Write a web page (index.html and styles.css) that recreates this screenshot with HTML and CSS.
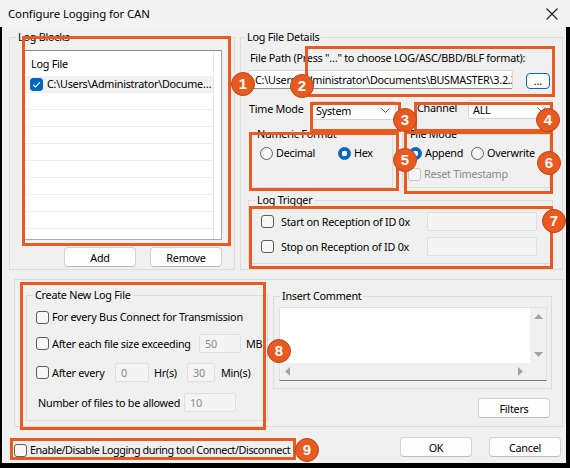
FILE: index.html
```html
<!DOCTYPE html>
<html>
<head>
<meta charset="utf-8">
<title>Configure Logging for CAN</title>
<link rel="stylesheet" href="styles.css">
</head>
<body>
<div class="titlebar">
  <span class="title">Configure Logging for CAN</span>
  <svg class="close" width="12" height="12" viewBox="0 0 12 12"><path d="M0.5 0.5L11.5 11.5M11.5 0.5L0.5 11.5" stroke="#1b1b1b" stroke-width="1.1" fill="none"/></svg>
</div>
<div class="client">
  <div class="top-row">
    <fieldset class="grp blocks">
      <legend class="lg-blocks">Log Blocks</legend>
      <div class="listbox">
        <div class="list-body">
          <div class="list-head">Log File</div>
          <div class="list-row sel">
            <span class="cb checked"><svg width="13" height="13" viewBox="0 0 13 13"><path d="M3.2 6.8L5.4 9L9.8 4.4" stroke="#fff" stroke-width="1.2" fill="none"/></svg></span>
            <span class="row-text">C:\Users\Administrator\Docume…</span>
          </div>
          <div class="list-row"></div>
          <div class="list-row"></div>
          <div class="list-row"></div>
          <div class="list-row"></div>
          <div class="list-row"></div>
          <div class="list-row"></div>
          <div class="list-row"></div>
          <div class="list-row"></div>
          <div class="list-row"></div>
        </div>
      </div>
      <div class="btn-row">
        <button class="btn">Add</button>
        <button class="btn">Remove</button>
      </div>
    </fieldset>

    <fieldset class="grp details">
      <legend class="lg-details">Log File Details</legend>
      <div class="fp-label">File Path (Press "…" to choose LOG/ASC/BBD/BLF format):</div>
      <div class="path-row">
        <div class="field path-field">C:\Users\Administrator\Documents\BUSMASTER\3.2.3\Log</div>
        <button class="btn browse">…</button>
      </div>
      <div class="mode-row">
        <span class="lbl tm-lbl">Time Mode</span>
        <div class="combo tm-combo"><span>System</span><svg width="9" height="5" viewBox="0 0 9 5"><path d="M0.5 0.5L4.5 4.5L8.5 0.5" stroke="#5f5f5f" stroke-width="1" fill="none"/></svg></div>
        <span class="lbl ch-lbl">Channel</span>
        <div class="combo ch-combo"><span>ALL</span><svg width="9" height="5" viewBox="0 0 9 5"><path d="M0.5 0.5L4.5 4.5L8.5 0.5" stroke="#5f5f5f" stroke-width="1" fill="none"/></svg></div>
      </div>
      <div class="groups-row">
        <fieldset class="grp numeric">
          <legend class="lg-num">Numeric Format</legend>
          <div class="radio-row num-row">
            <span class="opt dec"><span class="rb"></span>Decimal</span>
            <span class="opt"><span class="rb on"></span>Hex</span>
          </div>
        </fieldset>
        <fieldset class="grp filemode">
          <legend class="lg-fm">File Mode</legend>
          <div class="radio-row fm-row">
            <span class="opt app"><span class="rb on"></span>Append</span>
            <span class="opt"><span class="rb"></span>Overwrite</span>
          </div>
          <div class="reset-row disabled"><span class="cb dis"></span>Reset Timestamp</div>
        </fieldset>
      </div>
      <fieldset class="grp trigger">
        <legend class="lg-trig">Log Trigger</legend>
        <div class="trig-row">
          <span class="cb"></span><span class="trig-text">Start on Reception of ID 0x</span>
          <div class="field dis-field trig-field"></div>
        </div>
        <div class="trig-row second">
          <span class="cb"></span><span class="trig-text">Stop on Reception of ID 0x</span>
          <div class="field dis-field trig-field"></div>
        </div>
      </fieldset>
    </fieldset>
  </div>

  <div class="bottom-frame">
    <fieldset class="grp create">
      <legend class="lg-create">Create New Log File</legend>
      <div class="c-row r1"><span class="cb"></span><span class="c-text">For every Bus Connect for Transmission</span></div>
      <div class="c-row r2"><span class="cb"></span><span class="c-text w-size">After each file size exceeding</span><div class="field dis-field f-size">50</div><span class="unit">MB</span></div>
      <div class="c-row r3"><span class="cb"></span><span class="c-text w-every">After every</span><div class="field dis-field f-hr">0</div><span class="unit hr">Hr(s)</span><div class="field dis-field f-min">30</div><span class="unit min">Min(s)</span></div>
      <div class="c-row r4"><span class="c-text w-num">Number of files to be allowed</span><div class="field dis-field f-num">10</div></div>
    </fieldset>
    <div class="right-col">
      <fieldset class="grp comment">
        <legend class="lg-comment">Insert Comment</legend>
        <div class="textarea">
          <div class="ta-text"></div>
          <div class="vscroll">
            <svg width="9" height="5" viewBox="0 0 9 5"><path d="M0 5L4.5 0L9 5Z" fill="#a3a3a3"/></svg>
            <svg width="9" height="5" viewBox="0 0 9 5"><path d="M0 0L4.5 5L9 0Z" fill="#a3a3a3"/></svg>
          </div>
          <div class="hscroll">
            <svg width="5" height="9" viewBox="0 0 5 9"><path d="M5 0L0 4.5L5 9Z" fill="#a3a3a3"/></svg>
            <svg width="5" height="9" viewBox="0 0 5 9"><path d="M0 0L5 4.5L0 9Z" fill="#a3a3a3"/></svg>
          </div>
          <div class="corner"></div>
        </div>
      </fieldset>
      <button class="btn filters">Filters</button>
    </div>
  </div>

  <div class="footer">
    <span class="foot-check"><span class="cb"></span><span class="foot-text">Enable/Disable Logging during tool Connect/Disconnect</span></span>
    <button class="btn ok">OK</button>
    <button class="btn cancel">Cancel</button>
  </div>
</div>

<div class="annotations">
  <div class="hl hl1"></div>
  <div class="hl hl2"></div>
  <div class="hl hl3"></div>
  <div class="hl hl4"></div>
  <div class="hl hl5"></div>
  <div class="hl hl6"></div>
  <div class="hl hl7"></div>
  <div class="hl hl8"></div>
  <div class="hl hl9"></div>
  <span class="badge b1">1</span>
  <span class="badge b2">2</span>
  <span class="badge b3">3</span>
  <span class="badge b4">4</span>
  <span class="badge b5">5</span>
  <span class="badge b6">6</span>
  <span class="badge b7">7</span>
  <span class="badge b8">8</span>
  <span class="badge b9">9</span>
</div>
</body>
</html>
```
FILE: styles.css
```css
* { box-sizing: border-box; }
html, body { margin: 0; padding: 0; }
body {
  width: 570px; height: 468px; overflow: hidden; position: relative;
  background: #f0f0f0; color: #000;
  font-family: "Noto Sans", "DejaVu Sans", sans-serif; font-size: 10.8px; line-height: 16px;
  letter-spacing: -0.25px;
}
button { font-family: inherit; font-size: 10.8px; letter-spacing: -0.25px; color: #000; padding: 0; }

.titlebar {
  height: 27px; background: #f3f3f3;
  display: flex; align-items: center; justify-content: space-between;
  padding: 0 12px 0 8px;
}
.title { font-size: 11.4px; letter-spacing: -0.1px; }
.close { display: block; }

.client {
  height: 441px;
  border-left: 2px solid #000; border-right: 4px solid #000; border-bottom: 5px solid #000;
  display: flex; flex-direction: column;
}

/* group boxes */
fieldset.grp { margin: 0; padding: 0; border: 1px solid #dcdcdc; min-width: 0; }
fieldset.grp > legend { padding: 0 2px; margin-left: 6px; line-height: 16px; height: 16px; }
.lg-details { margin-left: 4px !important; }
.lg-num { margin-left: 4px !important; }
.lg-fm { margin-left: 5px !important; }
.lg-trig { margin-left: 6px !important; }
.lg-create { margin-left: 6px !important; }
.lg-comment { margin-left: 1px !important; }

/* common controls */
.cb {
  display: inline-block; width: 13px; height: 13px; flex: none;
  border: 1px solid #5d5d5d; border-radius: 3px; background: #f7f7f7;
}
.cb.checked { background: #0067c0; border-color: #0067c0; }
.cb.checked svg { display: block; margin: -1px; }
.cb.dis { border-color: #c5c5c5; background: #f5f5f5; }
.rb {
  display: inline-block; width: 13px; height: 13px; flex: none;
  border: 1px solid #5d5d5d; border-radius: 50%; background: #f7f7f7;
}
.rb.on { border-color: #0067c0; background: radial-gradient(circle, #fff 0 2.6px, #0067c0 3.1px); }
.btn {
  display: block; width: 72px; height: 20px;
  background: #fdfdfd; border: 1px solid #d2d2d2; border-bottom-color: #bdbdbd; border-radius: 4px;
  text-align: center; line-height: 17px;
}
.field {
  height: 19px; background: #fff; border: 1px solid #d7d7d7; border-bottom-color: #8f8f8f;
  border-radius: 2px; padding: 0 5px; line-height: 17px; white-space: nowrap; overflow: hidden;
}
.dis-field { background: #f4f4f4; border-color: #dfdfdf; color: #8b8b8b; }

/* top row */
.top-row { display: flex; margin-top: 2px; padding-left: 7px; }
.blocks { width: 226px; padding: 5px 0 2px 0 !important; }
.details { width: 323px; margin-left: 5px !important; padding: 0 0 5px 0 !important; }

.listbox {
  margin-left: 14px; width: 198px; height: 190px;
  background: #fff; border: 1px solid #a9a9a9; border-top-color: #8c8c8c; overflow: hidden;
}
.list-body { width: 189px; height: 188px; border-right: 1px solid #e6e6e6; }
.list-head { height: 25px; line-height: 25px; padding-left: 6px; }
.list-row { height: 17px; border-bottom: 1px solid #efefef; display: flex; align-items: center; padding-left: 5px; }
.list-row.sel { background: #f2f2f2; }
.row-text { margin-left: 4px; white-space: nowrap; }

.btn-row { display: flex; justify-content: flex-end; gap: 14px; margin: 7px 0 0 14px; width: 198px; }

.fp-label { margin: 5px 0 0 9px; white-space: nowrap; }
.path-row { display: flex; align-items: flex-start; margin-top: 4px; }
.path-field { margin-left: 7px; width: 265px; padding-left: 6px; }
.browse { width: 24px; height: 16px; margin: 3px 0 0 13px; border: 1px solid #0067c0; line-height: 10px; }

.mode-row { display: flex; align-items: flex-start; margin-top: 12px; height: 19px; }
.lbl { line-height: 16px; margin-top: 0; }
.tm-lbl { margin-left: 8px; width: 62px; }
.ch-lbl { margin-left: 21px; width: 51px; margin-top: -1px; }
.combo {
  height: 19px; background: #fff; border: 1px solid #d4d4d4; border-radius: 3px;
  display: flex; align-items: center; justify-content: space-between; padding: 0 5px 0 4px;
}
.combo svg { display: block; }
.tm-combo { width: 85px; }
.ch-combo { width: 84px; margin-top: -1px; }

.groups-row { display: flex; margin-top: 6px; }
.numeric { margin-left: 9px !important; width: 143px; height: 62px; }
.filemode { margin-left: 9px !important; width: 148px; height: 62px; }
.radio-row { display: flex; align-items: center; height: 16px; margin-top: 3px; }
.opt { display: flex; align-items: center; gap: 3px; white-space: nowrap; }
.num-row { padding-left: 9px; }
.dec { width: 78px; }
.fm-row { padding-left: 6px; }
.app { width: 62px; }
.reset-row { display: flex; align-items: center; gap: 3px; margin: 5px 0 0 5px; height: 16px; color: #8a8a8a; }

.trigger { margin: 4px 0 0 7px !important; width: 305px; padding: 4px 0 7px 0 !important; }
.trig-row { display: flex; align-items: center; height: 19px; }
.trig-row.second { margin-top: 6px; }
.trig-row .cb { margin-left: 12px; }
.trig-text { margin-left: 7px; width: 146px; white-space: nowrap; }
.trig-field { width: 110px; }

/* bottom */
.bottom-frame {
  display: flex; margin: 9px 0 0 12px; width: 549px; height: 148px;
  border: 1px solid #dcdcdc;
}
.create { margin: 7px 0 0 11px !important; width: 242px; height: 134px; padding-top: 6px !important; }
.c-row { display: flex; align-items: center; height: 19px; white-space: nowrap; }
.c-row .cb { margin-left: 9px; }
.c-row.r1 { height: 16px; }
.c-row.r2 { margin-top: 9px; }
.c-row.r3 { margin-top: 10px; }
.c-row.r4 { margin-top: 11px; }
.c-text { margin-left: 3px; }
.w-size { width: 147px; }
.w-every { width: 63px; }
.w-num { margin-left: 11px; width: 146px; }
.f-size { width: 42px; }
.f-hr { width: 34px; }
.f-min { width: 28px; }
.f-num { width: 52px; }
.unit { margin-left: 5px; }
.unit.hr { width: 33px; }
.unit.min { margin-left: 6px; }

.right-col { display: flex; flex-direction: column; margin-left: 5px; width: 279px; }
.comment { margin-top: 8px !important; height: 101px; padding: 3px 0 0 5px !important; }
.textarea {
  width: 268px; height: 74px; border: 1px solid #e2e2e2; border-bottom-color: #7a7a7a;
  display: grid; grid-template-columns: 250px 16px; grid-template-rows: 55px 17px;
}
.ta-text { background: #fff; }
.vscroll { background: #f0f0f0; display: flex; flex-direction: column; justify-content: space-between; align-items: center; padding: 6px 0 6px 1px; }
.hscroll { background: #f0f0f0; display: flex; justify-content: space-between; align-items: center; padding: 0 7px 0 5px; }
.vscroll svg, .hscroll svg { display: block; }
.corner { background: #f0f0f0; }
.filters { align-self: flex-end; margin: 9px 2px 0 0; }

.footer { display: flex; align-items: flex-start; margin-top: 10px; height: 20px; padding: 0 5px 0 12px; }
.foot-check { display: flex; align-items: center; gap: 3px; margin-top: 5px; height: 16px; white-space: nowrap; }
.foot-text { letter-spacing: -0.45px; }
.ok { margin-left: auto; }
.cancel { margin-left: 17px; }

/* annotations overlay */
.annotations { position: absolute; left: 0; top: 0; width: 570px; height: 468px; pointer-events: none; }
.hl { position: absolute; border: 3px solid #e85a20; }
.hl1 { left: 22px; top: 36px; width: 209px; height: 210px; }
.hl2 { left: 305px; top: 46px; width: 250px; height: 51px; }
.hl3 { left: 310px; top: 102px; width: 91px; height: 30px; }
.hl4 { left: 414px; top: 102px; width: 139px; height: 30px; }
.hl5 { left: 249px; top: 132px; width: 150px; height: 59px; }
.hl6 { left: 404px; top: 131px; width: 149px; height: 63px; }
.hl7 { left: 249px; top: 206px; width: 304px; height: 63px; }
.hl8 { left: 20px; top: 282px; width: 246px; height: 148px; }
.hl9 { left: 10px; top: 438px; width: 286px; height: 22px; }
.badge {
  position: absolute; width: 24px; height: 24px; margin: -12px 0 0 -12px;
  border-radius: 50%; background: #e85a20; border: 1px solid #b8461a;
  color: #fff; font-family: "Liberation Sans", Arial, sans-serif; font-weight: bold; font-size: 15px;
  line-height: 22px; text-align: center; letter-spacing: 0;
}
.b1 { left: 243px; top: 84px; }
.b2 { left: 302px; top: 86px; }
.b3 { left: 405px; top: 120px; }
.b4 { left: 548px; top: 120px; }
.b5 { left: 405px; top: 160px; }
.b6 { left: 549px; top: 163px; }
.b7 { left: 554px; top: 221px; }
.b8 { left: 279px; top: 351px; }
.b9 { left: 307px; top: 450px; }
```
